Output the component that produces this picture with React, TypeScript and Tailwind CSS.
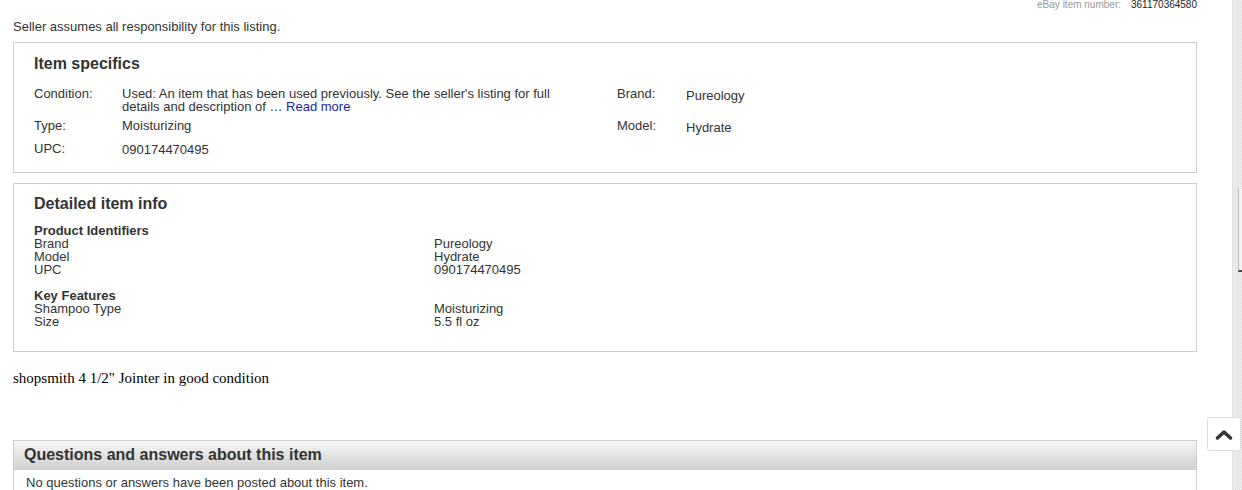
import React from "react";

const specs = [
  {
    label: "Condition:",
    value: "cond",
    label2: "Brand:",
    value2: "Pureology",
    mt: "mt-[13px]",
    pad: "",
  },
  { label: "Type:", value: "Moisturizing", label2: "Model:", value2: "Hydrate", mt: "mt-[6px]", pad: "" },
  { label: "UPC:", value: "090174470495", label2: "", value2: "", mt: "mt-[8px]", pad: "pt-[1px]" },
];

const details = [
  {
    title: "Product Identifiers",
    rows: [
      ["Brand", "Pureology"],
      ["Model", "Hydrate"],
      ["UPC", "090174470495"],
    ],
  },
  {
    title: "Key Features",
    rows: [
      ["Shampoo Type", "Moisturizing"],
      ["Size", "5.5 fl oz"],
    ],
  },
];

const App = () => {
  return (
    <div className="relative flex w-[1242px] h-[490px] overflow-hidden bg-white text-[#333] font-['Liberation_Sans',Arial,sans-serif]">
      <div className="flex-1 min-w-0">
        <div className="w-[1197px] flex justify-end items-center h-[10px] leading-[10px] text-[10px]">
          <span className="text-[#999]">eBay item number:</span>
          <span className="ml-[10px] text-[#222]">361170364580</span>
        </div>

        <div className="ml-[13px] w-[1184px]">
          <p className="mt-[10px] text-[13px] leading-[14px]">
            Seller assumes all responsibility for this listing.
          </p>

          {/* item specifics */}
          <div className="mt-[8px] border border-[#ccc] pt-[11px] pb-[16px] pl-[20px]">
            <h2 className="text-[16px] leading-[20px] font-bold">Item specifics</h2>
            {specs.map((row) => (
              <div
                key={row.label}
                className={`grid grid-cols-[88px_495px_69px_1fr] text-[13px] leading-[13px] ${row.mt}`}
              >
                <div>{row.label}</div>
                <div className={row.pad}>
                  {row.value === "cond" ? (
                    <div className="w-[445px]">
                      Used: An item that has been used previously. See the seller's listing for full
                      details and description of …{" "}
                      <span className="text-[#1a24a8]">Read more</span>
                    </div>
                  ) : (
                    row.value
                  )}
                </div>
                <div>{row.label2}</div>
                <div className="pt-[2px]">{row.value2}</div>
              </div>
            ))}
          </div>

          {/* detailed item info */}
          <div className="mt-[10px] border border-[#ccc] pt-[10px] pb-[23px] pl-[20px]">
            <h2 className="text-[16px] leading-[20px] font-bold">Detailed item info</h2>
            {details.map((group, i) => (
              <div key={group.title} className={i === 0 ? "mt-[10px]" : "mt-[13px]"}>
                <div className="text-[13px] leading-[13px] font-bold">{group.title}</div>
                {group.rows.map(([k, v]) => (
                  <div key={k} className="grid grid-cols-[400px_1fr] text-[13px] leading-[13px]">
                    <div>{k}</div>
                    <div>{v}</div>
                  </div>
                ))}
              </div>
            ))}
          </div>

          <p className="mt-[18px] text-[15px] leading-[17px] text-black font-['Liberation_Serif','Times_New_Roman',serif]">
            shopsmith 4 1/2" Jointer in good condition
          </p>

          {/* questions */}
          <div className="mt-[53px] border border-[#ccc] h-[80px]">
            <div className="h-[29px] pl-[10px] bg-gradient-to-b from-[#f6f6f6] to-[#cfcfcf] text-[16px] leading-[28px] font-bold">
              Questions and answers about this item
            </div>
            <p className="pl-[12px] pt-[6px] text-[13px] leading-[14px]">
              No questions or answers have been posted about this item.
            </p>
          </div>
        </div>
      </div>

      {/* right scroll strip */}
      <div className="w-[10px] h-full flex border-l border-[#e2e2e2]">
        <div className="w-[2px] bg-[#ececec]" />
        <div className="flex-1 bg-[image:repeating-conic-gradient(#d9d9d9_0_25%,#f7f7f7_0_50%)] bg-[length:2px_2px]">
          <div className="mt-[189px] ml-[3px] h-[83px] w-[4px] border-l border-[#bbb] border-b-2 border-b-[#444] bg-[#f3f3f3]" />
        </div>
      </div>

      {/* back to top */}
      <button className="absolute left-[1207px] top-[417px] w-[34px] h-[34px] rounded-[3px] border border-[#ddd] bg-white flex items-center justify-center">
        <svg width="18" height="11" viewBox="0 0 18 11">
          <polyline
            points="2.5,9 9,3 15.5,9"
            fill="none"
            stroke="#333"
            strokeWidth="3.5"
            strokeLinecap="round"
            strokeLinejoin="round"
          />
        </svg>
      </button>
    </div>
  );
};

export default App;
